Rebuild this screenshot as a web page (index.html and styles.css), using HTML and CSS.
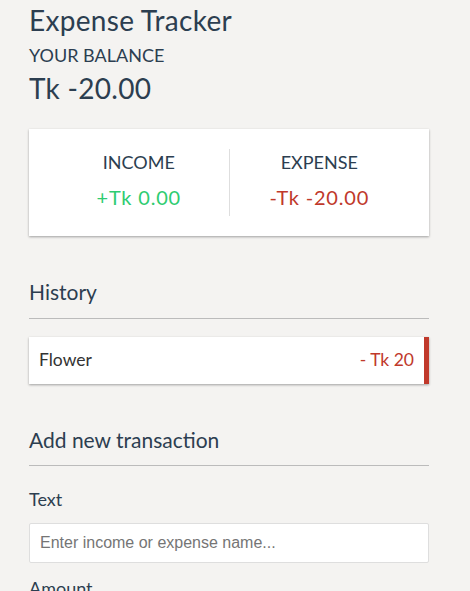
FILE: index.html
```html
<!DOCTYPE html>
<html>
<head>
<meta charset="utf-8">
<link rel="stylesheet" href="styles.css">
</head>
<body>
<div class="container">
  <h1 class="title">Expense Tracker</h1>
  <h4 class="bal-label">Your Balance</h4>
  <h1 class="balance">Tk -20.00</h1>
  <div class="inc-exp">
    <div class="col">
      <h4>Income</h4>
      <p class="money plus">+Tk 0.00</p>
    </div>
    <div class="col">
      <h4>Expense</h4>
      <p class="money minus">-Tk -20.00</p>
    </div>
  </div>
  <h3 class="section">History</h3>
  <ul class="list">
    <li class="minus"><span>Flower</span><span class="amt">- Tk 20</span></li>
  </ul>
  <h3 class="section add">Add new transaction</h3>
  <form>
    <div class="field">
      <label>Text</label>
      <input type="text" placeholder="Enter income or expense name...">
    </div>
    <div class="field">
      <label>Amount</label>
      <input type="number" placeholder="Enter amount...">
    </div>
  </form>
</div>
</body>
</html>
```
FILE: styles.css
```css
* { box-sizing: border-box; }
html, body { margin: 0; }
body {
  background: #f4f3f1;
  font-family: Lato, "Noto Sans", sans-serif;
  color: #2c3e50;
}
.container {
  width: 400px;
  margin-left: 29px;
  padding-top: 3px;
}
.title {
  font-size: 28px;
  font-weight: 400;
  margin: 0;
  letter-spacing: 0.3px;
  line-height: 34px;
}
.bal-label {
  font-size: 18px;
  font-weight: 400;
  margin: 7px 0 0;
  line-height: 22px;
  text-transform: uppercase;
}
.balance {
  font-size: 28px;
  font-weight: 400;
  margin: 5px 0 0;
  line-height: 34px;
  letter-spacing: 0.3px;
}
.inc-exp {
  background: #fff;
  box-shadow: 0 1px 3px rgba(0,0,0,0.12), 0 1px 2px rgba(0,0,0,0.24);
  padding: 20px;
  display: flex;
  margin: 24px 0 0;
}
.col {
  flex: 1;
  text-align: center;
}
.col:first-child { border-right: 1px solid #dedede; }
.col h4 {
  font-size: 18px;
  font-weight: 400;
  margin: 2px 0 0;
  line-height: 22px;
  text-transform: uppercase;
}
.money {
  font-size: 20px;
  letter-spacing: 0.8px;
  line-height: 24px;
  margin: 12px 0 7px;
}
.plus { color: #2ecc71; }
.minus { color: #c0392b; }
.section {
  font-size: 21px;
  font-weight: 400;
  line-height: 25px;
  margin: 43px 0 0;
  padding-bottom: 14px;
  border-bottom: 1px solid #bbb;
}
.section.add { padding-bottom: 13px; }
.list {
  list-style: none;
  padding: 0;
  margin: 18px 0 0;
}
.list li {
  background: #fff;
  box-shadow: 0 1px 3px rgba(0,0,0,0.12), 0 1px 2px rgba(0,0,0,0.24);
  color: #333;
  display: flex;
  justify-content: space-between;
  padding: 12px 10px 0;
  font-size: 17.5px;
  line-height: 21px;
  height: 47px;
}
.list li.minus { border-right: 5px solid #c0392b; }
.list li .amt { color: #c0392b; }
form { margin-top: 22px; }
.field label {
  display: block;
  font-size: 18px;
  line-height: 22px;
  margin: 0 0 13px;
}
.field input {
  display: block;
  width: 100%;
  height: 40px;
  border: 1px solid #dedede;
  border-radius: 2px;
  padding: 10px;
  font-size: 16px;
  font-family: "Liberation Sans", Arial, sans-serif;
  margin-bottom: 14px;
}
.field input::placeholder { color: #757575; }
```
